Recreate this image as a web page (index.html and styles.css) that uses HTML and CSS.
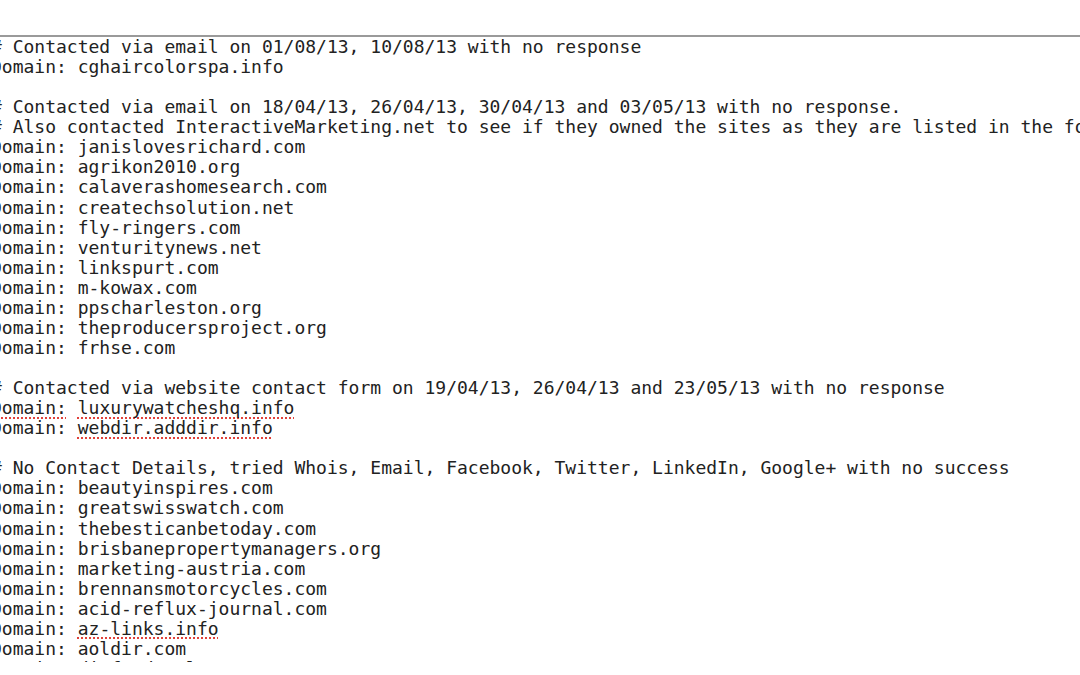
FILE: index.html
```html
<!DOCTYPE html>
<html>
<head>
<meta charset="utf-8">
<link rel="stylesheet" href="styles.css">
</head>
<body>
<div class="page">
<div class="toolbar"></div>
<pre class="doc"># Contacted via email on 01/08/13, 10/08/13 with no response
Domain: cghaircolorspa.info

# Contacted via email on 18/04/13, 26/04/13, 30/04/13 and 03/05/13 with no response.
# Also contacted InteractiveMarketing.net to see if they owned the sites as they are listed in the footer
Domain: janislovesrichard.com
Domain: agrikon2010.org
Domain: calaverashomesearch.com
Domain: createchsolution.net
Domain: fly-ringers.com
Domain: venturitynews.net
Domain: linkspurt.com
Domain: m-kowax.com
Domain: ppscharleston.org
Domain: theproducersproject.org
Domain: frhse.com

# Contacted via website contact form on 19/04/13, 26/04/13 and 23/05/13 with no response
D<span class="sp">omain:</span> <span class="sp">luxurywatcheshq.info</span>
Domain: <span class="sp">webdir.adddir.info</span>

# No Contact Details, tried Whois, Email, Facebook, Twitter, LinkedIn, Google+ with no success
Domain: beautyinspires.com
Domain: greatswisswatch.com
Domain: thebesticanbetoday.com
Domain: brisbanepropertymanagers.org
Domain: marketing-austria.com
Domain: brennansmotorcycles.com
Domain: acid-reflux-journal.com
Domain: <span class="sp">az-links.info</span>
Domain: aoldir.com
Domain: dirfordevelopers.com</pre>
</div>
</body>
</html>
```

FILE: styles.css
```css
html, body {
  margin: 0;
  padding: 0;
  background: #ffffff;
}

body {
  width: 1080px;
  height: 675px;
  overflow: hidden;
}

.page {
  display: flex;
  flex-direction: column;
  width: 1080px;
  height: 675px;
  overflow: hidden;
}

.toolbar {
  flex: 0 0 35px;
  border-bottom: 2px solid #9a9a9a;
  background: #ffffff;
}

.doc {
  margin: 0 0 0 -9px;
  padding: 0;
  height: 625px;
  overflow: hidden;
  font-family: "DejaVu Sans Mono", "Liberation Mono", monospace;
  font-size: 18px;
  line-height: 20.07px;
  color: #222222;
  white-space: pre;
}

.sp {
  text-decoration-line: underline;
  text-decoration-style: dotted;
  text-decoration-color: #e0413a;
  text-decoration-thickness: 2px;
  text-underline-offset: 3px;
  text-decoration-skip-ink: none;
}
```
